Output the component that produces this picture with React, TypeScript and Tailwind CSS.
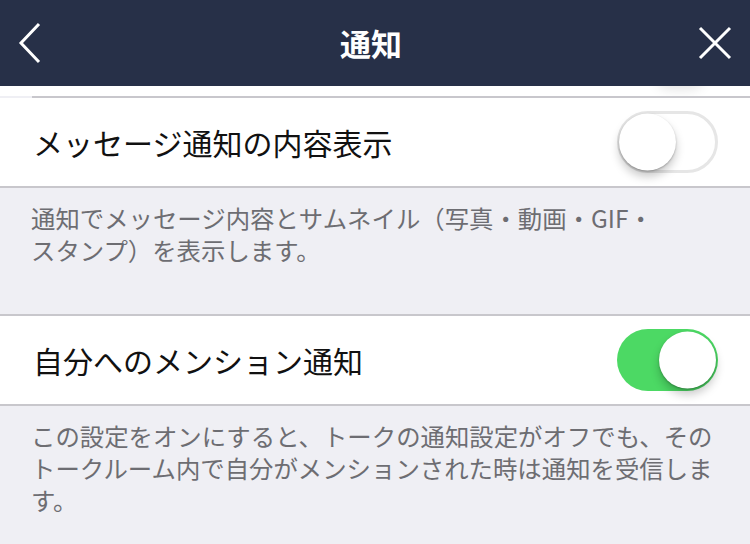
import React from 'react';

const font = { fontFamily: '"Noto Sans CJK JP", "Noto Sans", sans-serif' };

function Toggle({ on }: { on: boolean }) {
  return (
    <div
      className={`relative h-[62px] w-[101px] rounded-full ${
        on ? 'bg-[#4cd964]' : 'bg-white border-[3px] border-[#e6e6e6]'
      }`}
    >
      <div
        className={`absolute top-1/2 h-[57px] w-[57px] -translate-y-1/2 rounded-full bg-white shadow-[0_6px_10px_rgba(0,0,0,0.22),0_1px_2px_rgba(0,0,0,0.25)] ${
          on ? 'right-[2px]' : 'left-[-1px]'
        }`}
      />
    </div>
  );
}

function Row({ label, on }: { label: string; on: boolean }) {
  return (
    <div className="flex h-[90px] items-center justify-between border-b-2 border-[#c8c7cc] bg-white pl-[33px] pr-[32px]">
      <span className="text-[30px] leading-none text-[#111]">{label}</span>
      <Toggle on={on} />
    </div>
  );
}

export default function App() {
  return (
    <div className="h-[544px] w-[750px] overflow-hidden bg-[#efeff4]" style={font}>
      <header className="flex h-[86px] items-center justify-between bg-[#273048] px-[16px]">
        <svg width="26" height="42" viewBox="0 0 26 42" className="ml-[2px]">
          <path d="M21 2 L3 21 L21 40" fill="none" stroke="white" strokeWidth="3" />
        </svg>
        <h1 className="text-[31px] font-bold text-white">通知</h1>
        <svg width="34" height="34" viewBox="0 0 34 34" className="mr-[2px]">
          <path d="M2 2 L32 32 M32 2 L2 32" fill="none" stroke="white" strokeWidth="3" />
        </svg>
      </header>

      <div className="relative h-[10px] overflow-hidden bg-white">
        <div className="absolute left-[655px] top-[-30px] h-[30px] w-[50px] rounded-full bg-white shadow-[0_4px_12px_rgba(0,0,0,0.10)]" />
      </div>
      <div className="ml-[32px] h-[2px] bg-[#c8c7cc]" />

      <Row label="メッセージ通知の内容表示" on={false} />
      <div className="h-[126px] px-[31px] pt-[14px] text-[24.4px] leading-[32px] text-[#6d6d72]">
        <p>通知でメッセージ内容とサムネイル（写真・動画・GIF・</p>
        <p>スタンプ）を表示します。</p>
      </div>

      <div className="h-[2px] bg-[#c8c7cc]" />
      <Row label="自分へのメンション通知" on={true} />
      <div className="px-[31px] pt-[14px] text-[24.4px] leading-[32px] text-[#6d6d72]">
        <p>この設定をオンにすると、トークの通知設定がオフでも、その</p>
        <p>トークルーム内で自分がメンションされた時は通知を受信しま</p>
        <p>す。</p>
      </div>
    </div>
  );
}
